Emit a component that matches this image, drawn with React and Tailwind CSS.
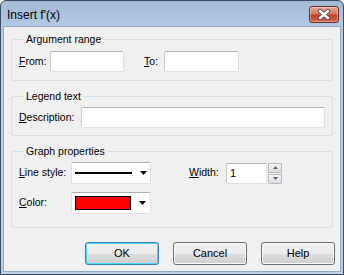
import React from 'react';

const font = { fontFamily: '"Liberation Sans", Arial, sans-serif' };

function U({ children }) {
  return <span className="underline underline-offset-[1px]">{children}</span>;
}

function TextBox({ className = '', children }) {
  return (
    <div
      className={`h-[21px] bg-white border border-[#dbdfe6] border-t-[#abadb3] border-l-[#c5c9d0] rounded-[2px] flex items-center px-[3px] ${className}`}
    >
      {children}
    </div>
  );
}

function Arrow() {
  return (
    <svg width="7" height="4" viewBox="0 0 7 4" className="shrink-0">
      <path d="M0 0h7L3.5 4z" fill="#000" />
    </svg>
  );
}

function Combo({ children }) {
  return (
    <div className="w-[80px] h-[22px] bg-white border border-[#dbdfe6] border-t-[#abadb3] rounded-[2px] flex items-center pl-[2px] pr-[4px] gap-[8px]">
      <div className="flex-1 flex items-center">{children}</div>
      <Arrow />
    </div>
  );
}

function Button({ children, def }) {
  return (
    <div
      className={`w-[74px] h-[23px] rounded-[3px] border flex items-center justify-center text-[11px] text-black ${
        def
          ? 'border-[#3c7fb1] shadow-[inset_0_0_0_1px_#48d8fb]'
          : 'border-[#707070] shadow-[inset_0_0_0_1px_#fcfcfc]'
      } bg-[linear-gradient(#f2f2f2_0%,#ebebeb_50%,#dddddd_51%,#cfcfcf_100%)]`}
    >
      {children}
    </div>
  );
}

function Group({ title, className = '', children }) {
  return (
    <fieldset className={`mx-[7px] border border-[#d5dfe5] rounded-[3px] px-[7px] ${className}`}>
      <legend className="ml-[5px] px-[2px] leading-[14px] text-[10.5px]">{title}</legend>
      {children}
    </fieldset>
  );
}

export default function App() {
  return (
    <div
      style={font}
      className="w-[344px] h-[275px] border border-[#3b4d63] rounded-t-[6px] bg-[linear-gradient(#a2bbd5,#bcd2ea_40px)] flex flex-col overflow-hidden"
    >
      <div className="h-[25px] flex items-center justify-between pl-[6px] pr-[4px] shrink-0">
        <span className="text-[12px] text-black pt-[2px]">Insert f'(x)</span>
        <div className="w-[30px] h-[17px] mt-[1px] rounded-[3px] border border-[#6b2a22] bg-[linear-gradient(#e9a99b,#d27a68_45%,#c2402c_55%,#d2664f)] shadow-[inset_0_0_0_1px_rgba(255,255,255,0.35)] flex items-center justify-center">
          <svg width="14" height="11" viewBox="0 0 14 11">
            <path d="M3 2l8 7M11 2l-8 7" stroke="#5a4a48" strokeWidth="4.2" strokeLinecap="round" />
            <path d="M3 2l8 7M11 2l-8 7" stroke="#ffffff" strokeWidth="2.4" strokeLinecap="round" />
          </svg>
        </div>
      </div>

      <div className="flex-1 mx-[2px] mb-[2px] border border-[#8fa7c1] bg-[#f0f0f0] flex flex-col text-[10.5px] text-black">
        <Group title="Argument range" className="mt-[5px] pt-[5px] pb-[8px]">
          <div className="flex items-center">
            <span className="w-[31px]">
              <U>F</U>rom:
            </span>
            <TextBox className="w-[74px]" />
            <span className="ml-[20px] w-[20px]">
              <U>T</U>o:
            </span>
            <TextBox className="w-[75px]" />
          </div>
        </Group>

        <Group title="Legend text" className="mt-[8px] pt-[4px] pb-[7px]">
          <div className="flex items-center">
            <span className="w-[62px]">
              <U>D</U>escription:
            </span>
            <TextBox className="flex-1" />
          </div>
        </Group>

        <Group title="Graph properties" className="mt-[8px] pt-[4px] pb-[13px]">
          <div className="flex flex-col gap-[8px]">
            <div className="flex items-center">
              <span className="w-[52px]">
                <U>L</U>ine style:
              </span>
              <Combo>
                <div className="w-[57px] h-[2px] ml-[1px] bg-black" />
              </Combo>
              <span className="ml-[38px] w-[37px]">
                <U>W</U>idth:
              </span>
              <TextBox className="w-[41px] text-[11px]">1</TextBox>
              <div className="ml-[1px] flex flex-col gap-[1px]">
                <div className="w-[14px] h-[10px] border border-[#b5b8bd] rounded-[1px] bg-[linear-gradient(#f4f4f4,#dcdcdc)] flex items-center justify-center">
                  <svg width="5" height="3" viewBox="0 0 5 3">
                    <path d="M0 3h5L2.5 0z" fill="#4c607f" />
                  </svg>
                </div>
                <div className="w-[14px] h-[10px] border border-[#b5b8bd] rounded-[1px] bg-[linear-gradient(#f4f4f4,#dcdcdc)] flex items-center justify-center">
                  <svg width="5" height="3" viewBox="0 0 5 3">
                    <path d="M0 0h5L2.5 3z" fill="#4c607f" />
                  </svg>
                </div>
              </div>
            </div>
            <div className="flex items-center">
              <span className="w-[52px]">
                <U>C</U>olor:
              </span>
              <Combo>
                <div className="w-[56px] h-[14px] ml-[1px] bg-[#ff0000] border border-black" />
              </Combo>
            </div>
          </div>
        </Group>

        <div className="mt-[14px] flex justify-end gap-[14px] pr-[5px]">
          <Button def>OK</Button>
          <Button>Cancel</Button>
          <Button>Help</Button>
        </div>
      </div>
    </div>
  );
}
